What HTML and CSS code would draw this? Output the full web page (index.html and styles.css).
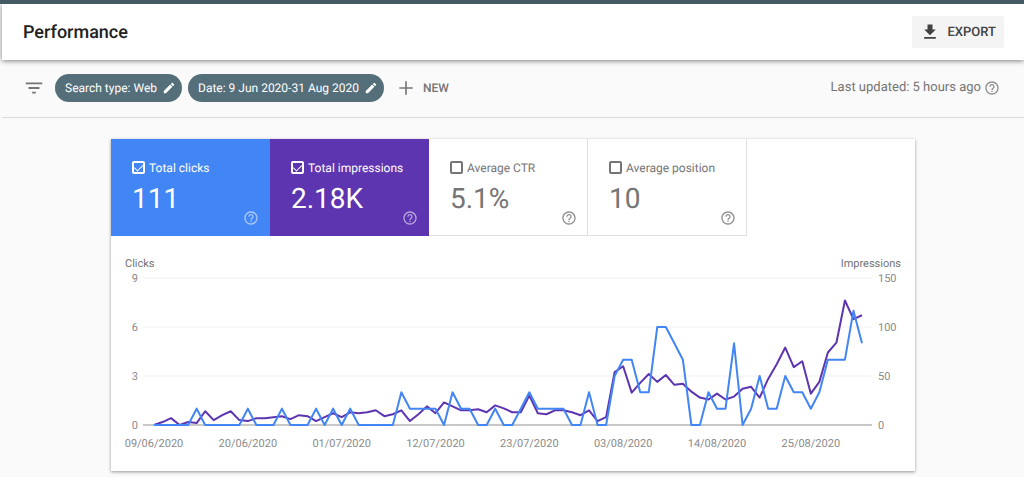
FILE: index.html
```html
<!DOCTYPE html>
<html lang="en">
<head>
<meta charset="utf-8">
<meta name="viewport" content="width=device-width, initial-scale=1">
<title>Performance</title>
<link rel="stylesheet" href="styles.css">
</head>
<body>
<svg class="sprite" aria-hidden="true">
  <symbol id="help" viewBox="0 0 24 24"><path d="M11 18h2v-2h-2v2zm1-16C6.48 2 2 6.48 2 12s4.480 10 10 10 10-4.480 10-10S17.520 2 12 2zm0 18c-4.410 0-8-3.590-8-8s3.590-8 8-8 8 3.590 8 8-3.590 8-8 8zm0-14c-2.210 0-4 1.790-4 4h2c0-1.100.9-2 2-2s2 .9 2 2c0 2-3 1.750-3 5h2c0-2.250 3-2.500 3-5 0-2.210-1.790-4-4-4z"/></symbol>
  <symbol id="edit" viewBox="0 0 24 24"><path d="M3 17.250V21h3.750L17.810 9.940l-3.750-3.750L3 17.250zM20.710 7.040c.39-.39.39-1.020 0-1.410l-2.340-2.340c-.39-.39-1.020-.39-1.410 0l-1.830 1.830 3.750 3.750 1.830-1.830z"/></symbol>
</svg>
<header class="header">
  <h1 class="title">Performance</h1>
  <button class="export" type="button">
    <svg class="icon-large" viewBox="0 0 24 24" aria-hidden="true"><path d="M19 9h-4V3H9v6H5l7 7 7-7zM5 18v2h14v-2H5z"/></svg>
    <span>EXPORT</span>
  </button>
</header>
<div class="filters">
  <svg class="filter-icon" viewBox="0 0 24 24" role="img" aria-label="Filters"><path d="M10 18h4v-2h-4v2zM3 6v2h18V6H3zm3 7h12v-2H6v2z"/></svg>
  <button class="chip" type="button"><span>Search type: Web</span><svg class="icon-small" aria-hidden="true"><use href="#edit"/></svg></button>
  <button class="chip" type="button"><span>Date: 9 Jun 2020-31 Aug 2020</span><svg class="icon-small" aria-hidden="true"><use href="#edit"/></svg></button>
  <button class="new" type="button">
    <svg class="icon-large" viewBox="0 0 24 24" aria-hidden="true"><path d="M20 13h-7v7h-2v-7H4v-2h7V4h2v7h7v2z"/></svg>
    <span>NEW</span>
  </button>
  <div class="updated"><span>Last updated: 5 hours ago</span><button class="help" type="button" aria-label="About last update"><svg class="icon-medium" aria-hidden="true"><use href="#help"/></svg></button></div>
</div>
<main class="content">
  <section class="card">
    <div class="tiles">
      <div class="tile tile-clicks">
        <label class="metric" for="clicks"><input class="check" id="clicks" type="checkbox" checked>Total clicks</label>
        <div class="value">111</div>
        <button class="help tile-help" type="button" aria-label="About total clicks"><svg class="icon-medium" aria-hidden="true"><use href="#help"/></svg></button>
      </div>
      <div class="tile tile-impressions">
        <label class="metric" for="impressions"><input class="check" id="impressions" type="checkbox" checked>Total impressions</label>
        <div class="value">2.18K</div>
        <button class="help tile-help" type="button" aria-label="About total impressions"><svg class="icon-medium" aria-hidden="true"><use href="#help"/></svg></button>
      </div>
      <div class="tile">
        <label class="metric" for="ctr"><input class="check" id="ctr" type="checkbox">Average CTR</label>
        <div class="value">5.1%</div>
        <button class="help tile-help" type="button" aria-label="About average CTR"><svg class="icon-medium" aria-hidden="true"><use href="#help"/></svg></button>
      </div>
      <div class="tile">
        <label class="metric" for="position"><input class="check" id="position" type="checkbox">Average position</label>
        <div class="value">10</div>
        <button class="help tile-help" type="button" aria-label="About average position"><svg class="icon-medium" aria-hidden="true"><use href="#help"/></svg></button>
      </div>
    </div>
    <svg class="chart" id="chart" viewBox="0 0 804 235" role="img" aria-label="Clicks and impressions per day">
      <text class="axis-title" x="14" y="31">Clicks</text>
      <text class="axis-title end" x="790" y="31">Impressions</text>
    </svg>
  </section>
</main>
<script src="chart.js"></script>
</body>
</html>
```
FILE: styles.css
```css
* {
  box-sizing: border-box;
}

body {
  margin: 0;
  border-top: 4px solid #455a64;
  background: #fafafa;
  color: #757575;
  font-family: Roboto, "Liberation Sans", sans-serif;
  font-size: 12px;
  text-rendering: geometricPrecision;
}

button {
  margin: 0;
  padding: 0;
  border: 0;
  background: none;
  color: inherit;
  font: inherit;
  text-rendering: inherit;
  cursor: pointer;
}

svg {
  display: block;
  flex: none;
  fill: currentColor;
}

.sprite {
  display: none;
}

.icon-small {
  width: 14px;
  height: 14px;
}

.icon-medium {
  width: 16px;
  height: 16px;
}

.icon-large {
  width: 20px;
  height: 20px;
}

.header {
  display: flex;
  align-items: center;
  justify-content: space-between;
  height: 56px;
  margin-left: 2px;
  padding: 0 20px 0 21px;
  background: #fff;
  box-shadow: 0 1px 5px rgba(0, 0, 0, 0.5);
}

.title {
  margin: 0;
  color: #212121;
  font-size: 18px;
  font-weight: 500;
}

.export {
  display: flex;
  align-items: center;
  gap: 8px;
  height: 32px;
  padding: 0 8px;
  border-radius: 2px;
  background: #f4f4f4;
  color: #424242;
  font-size: 13px;
  font-weight: 500;
}

.filters {
  display: flex;
  align-items: center;
  height: 58px;
  margin-left: 2px;
  padding: 0 24px 2px 21px;
  border-bottom: 1px solid #dcdcdc;
}

.filter-icon {
  width: 22px;
  height: 22px;
  margin-right: 10px;
}

.chip {
  display: flex;
  align-items: center;
  gap: 5px;
  height: 28px;
  margin-right: 6px;
  padding: 0 6px 0 10px;
  border-radius: 14px;
  background: #546e7a;
  color: #fff;
}

.new {
  display: flex;
  align-items: center;
  gap: 7px;
  margin-left: 6px;
  font-weight: 500;
}

.updated {
  display: flex;
  align-items: center;
  gap: 3px;
  margin-left: auto;
  font-size: 13px;
  line-height: 16px;
}

.help {
  opacity: 0.8;
}

.content {
  padding: 21px 109px 6px 111px;
}

.card {
  background: #fff;
  box-shadow: 0 1px 3px rgba(0, 0, 0, 0.4);
}

.tiles {
  display: grid;
  grid-template-columns: repeat(4, minmax(0, 159px));
}

.tile {
  position: relative;
  height: 97px;
  padding: 21px 0 0 21px;
  border: 1px solid #e0e0e0;
  border-width: 0 1px 1px 0;
}

.tile-clicks {
  border-color: #4285f4;
  background: #4285f4;
  color: #fff;
}

.tile-impressions {
  border-color: #5e35b1;
  background: #5e35b1;
  color: #fff;
}

.metric {
  display: flex;
  align-items: center;
  gap: 4px;
  height: 15px;
}

.check {
  display: grid;
  place-items: center;
  appearance: none;
  width: 13px;
  height: 13px;
  margin: 0;
  border: 2px solid currentColor;
  border-radius: 2px;
  color: inherit;
}

.check:checked::after {
  content: "";
  width: 4px;
  height: 7px;
  border: solid currentColor;
  border-width: 0 1px 1px 0;
  transform: translateY(-1px) rotate(45deg);
}

.value {
  margin-top: 8px;
  font-size: 28px;
  line-height: 32px;
}

.tile-help {
  position: absolute;
  right: 10px;
  bottom: 9px;
}

.tile-clicks .tile-help,
.tile-impressions .tile-help {
  opacity: 0.55;
}

.chart {
  width: 100%;
  height: auto;
}

.axis-title {
  font-size: 11px;
}

.tick {
  fill: #8a8a8a;
  font-size: 11px;
}

.end {
  text-anchor: end;
}

.middle {
  text-anchor: middle;
}

.grid {
  stroke: #f1f1f1;
}

.baseline {
  stroke: #c8c8c8;
  stroke-width: 2;
}

.line {
  fill: none;
  stroke-width: 2;
  stroke-linejoin: round;
}

.line-clicks {
  stroke: #4285f4;
}

.line-impressions {
  stroke: #5e35b1;
}
```
FILE: chart.js
```js
const clicks = [
  0,0,0,0,0,1,0,0,0,0,0,1,0,0,0,1,0,0,0,1,0,1,0,1,0,0,0,0,
  0,2,1,1,1,1,0,2,1,1,0,0,1,0,0,1,2,1,1,1,1,0,0,2,0,0,3,4,
  4,2,2,6,6,5,4,0,0,2,1,1,5,0,1,3,1,1,3,2,2,1,2,4,4,4,7,5
];
const impressions = [
  0,3,7,0,3,2,14,5,10,14,5,4,7,7,8,9,6,10,9,4,8,12,8,13,12,13,15,9,
  11,15,4,11,19,12,23,19,15,15,16,13,20,17,13,13,30,12,11,15,15,13,10,15,4,8,54,60,
  33,43,52,44,51,41,42,34,28,26,32,26,29,37,39,28,47,62,79,59,65,32,44,74,84,127,108,112
];
const dates = ["09/06/2020", "20/06/2020", "01/07/2020", "12/07/2020", "23/07/2020", "03/08/2020", "14/08/2020", "25/08/2020"];

const chart = document.getElementById("chart");
const left = 43;
const right = 751;
const top0 = 42;
const bottom = 189;
const x = (day) => left + day * (right - left) / (clicks.length - 1);
const y = (value, max) => bottom - value * (bottom - top0) / max;

function add(name, attributes, text) {
  const node = document.createElementNS("http://www.w3.org/2000/svg", name);
  for (const key in attributes) node.setAttribute(key, attributes[key]);
  if (text !== undefined) node.textContent = text;
  chart.append(node);
}

for (let i = 0; i < 4; i++) {
  const rowY = bottom - i * 49;
  add("line", { class: i ? "grid" : "baseline", x1: 32, x2: 761, y1: rowY, y2: rowY });
  add("text", { class: "tick end", x: 27, y: rowY + 4 }, i * 3);
  add("text", { class: "tick", x: 767, y: rowY + 4 }, i * 50);
}
dates.forEach((date, i) => add("text", { class: "tick middle", x: x(i * 11), y: 211 }, date));

function series(values, max, className) {
  add("polyline", { class: "line " + className, points: values.map((v, i) => x(i) + "," + y(v, max)).join(" ") });
}
series(impressions, 150, "line-impressions");
series(clicks, 9, "line-clicks");
```
